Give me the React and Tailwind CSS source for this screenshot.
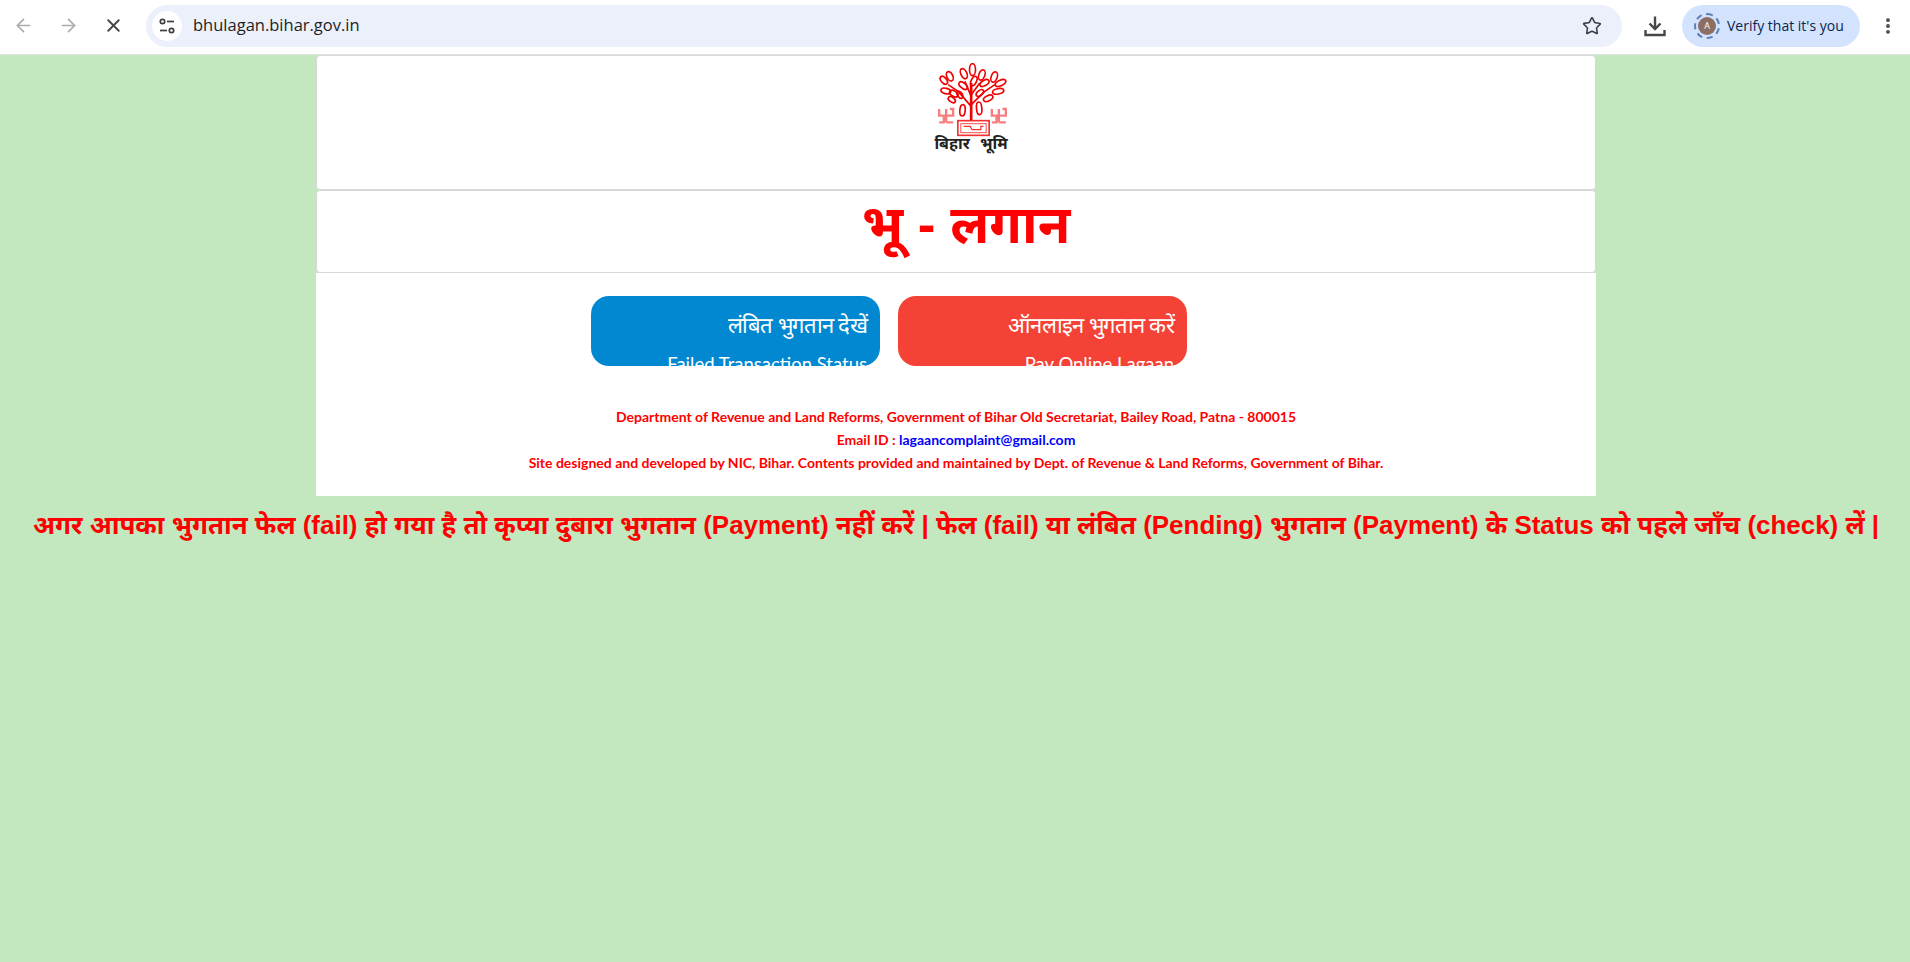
import React from "react";
import { ArrowLeft, ArrowRight, X, Star, EllipsisVertical } from "lucide-react";

const leaves = [
	[248, 60, 9, 18, 0],
	[222, 72, 9, 16, -25],
	[276, 76, 9, 16, 20],
	[252, 94, 8, 15, 25],
	[220, 108, 8, 15, -50],
	[284, 100, 8, 15, 60],
	[180, 80, 9, 15, -25],
	[162, 92, 8, 14, -40],
	[313, 82, 9, 16, 20],
	[332, 100, 8, 17, 65],
	[168, 124, 8, 15, -75],
	[192, 132, 8, 14, -60],
	[325, 125, 8, 17, 80],
	[295, 146, 8, 15, 65],
	[186, 150, 7, 12, -55],
	[210, 135, 7, 12, -35],
	[270, 130, 7, 13, 50],
	[218, 182, 8, 17, 5],
	[268, 176, 8, 19, -5],
];

function TuneIcon() {
	return (
		<svg width="18" height="18" viewBox="0 0 18 18" fill="none" stroke="#3c4043" strokeWidth="1.7">
			<circle cx="4.5" cy="4.5" r="2.2" />
			<path d="M9 4.5h7" />
			<path d="M2 13.5h7" />
			<circle cx="13.5" cy="13.5" r="2.2" />
		</svg>
	);
}

function DownloadIcon() {
	return (
		<svg width="22" height="22" viewBox="0 0 22 22" fill="none" stroke="#474747" strokeWidth="2.4">
			<path d="M11 1.5v12" />
			<path d="M5.5 8.5l5.5 5.5 5.5-5.5" />
			<path d="M1.5 15v5h19v-5" />
		</svg>
	);
}

function BiharLogo() {
	return (
		<div className="ml-[30px] flex flex-col items-center">
			<svg width="77" height="74" viewBox="130 40 230 222" fill="none" stroke="#f00000" strokeWidth="5">
				{leaves.map(([cx, cy, rx, ry, rot], i) => (
					<ellipse key={i} cx={cx} cy={cy} rx={rx} ry={ry} transform={`rotate(${rot} ${cx} ${cy})`} />
				))}
				<path d="M244 212V100" strokeWidth="8" />
				<path d="M244 170L205 125M244 165L285 125M244 140L225 95M244 135L270 100M205 125L175 105M285 125L315 105" strokeWidth="5" />
				<g strokeWidth="7" opacity="0.5">
					<path d="M148 178v20h42v-20h-10M169 178v40M148 218h14v-20M190 218h-21" />
					<path d="M306 178v20h42v-20h-10M327 178v40M306 218h14v-20M348 218h-21" />
				</g>
				<rect x="204" y="213" width="94" height="44" strokeWidth="5" opacity="0.8" />
				<rect x="213" y="222" width="76" height="27" strokeWidth="3" opacity="0.7" />
				<path d="M221 230h20l6 10h26v-10h8" strokeWidth="3.5" opacity="0.8" />
			</svg>
			<div className="mt-[-2px] text-[16px] leading-[17px] font-bold [word-spacing:6px] text-[#222] font-['Noto_Sans','Lato',sans-serif]">
				बिहार भूमि
			</div>
		</div>
	);
}

function Toolbar() {
	return (
		<div className="flex h-[55px] items-center bg-white border-b border-[#e2e2e2] pb-[3px] font-['Open_Sans',sans-serif]">
			<div className="flex w-[146px] items-center pl-[13px] gap-[24px]">
				<ArrowLeft size={21} strokeWidth={1.9} className="text-[#ababab]" />
				<ArrowRight size={21} strokeWidth={1.9} className="text-[#ababab]" />
				<X size={21} strokeWidth={2.2} className="text-[#474747]" />
			</div>
			<div className="flex h-[42px] w-[1476px] items-center rounded-full bg-[#ebf0fa] pl-[6px] pr-[20px]">
				<div className="flex h-[30px] w-[30px] items-center justify-center rounded-full bg-white">
					<TuneIcon />
				</div>
				<span className="ml-[11px] text-[16.5px] text-[#1f1f1f]">bhulagan.bihar.gov.in</span>
				<Star size={20} strokeWidth={1.9} className="ml-auto text-[#3c4043]" />
			</div>
			<div className="flex w-[60px] justify-center pl-[6px]">
				<DownloadIcon />
			</div>
			<div className="flex h-[42px] w-[178px] items-center rounded-full bg-[#d3e3fd] pl-[12px]">
				<div className="flex h-[26px] w-[26px] items-center justify-center rounded-full border-2 border-dashed border-[#5b7fb5]">
					<div className="flex h-[18px] w-[18px] items-center justify-center rounded-full bg-[#8d6e63] text-[9px] text-white">
						A
					</div>
				</div>
				<span className="ml-[7px] text-[14px] text-[#0a2351]">Verify that it's you</span>
			</div>
			<EllipsisVertical size={20} strokeWidth={2.6} className="ml-[18px] text-[#474747]" />
		</div>
	);
}

function StatusButton({ color, hindi, english }) {
	return (
		<div className={`h-[70px] w-[289px] overflow-hidden rounded-[18px] pr-[13px] pt-[14px] text-right text-white ${color}`}>
			<div className="text-[22px] leading-[29px] tracking-[-0.7px] font-light">{hindi}</div>
			<div className="mt-[13px] text-[18.5px] leading-[24px]">{english}</div>
		</div>
	);
}

export default function App() {
	return (
		<div className="flex min-h-[962px] flex-col bg-[#c3e8c0] font-['Liberation_Sans','Noto_Sans',sans-serif]">
			<Toolbar />
			<div className="ml-[316px] flex w-[1280px] flex-col">
				<div className="flex h-[135px] justify-center rounded-[4px] border border-[#d8d8d8] bg-white pt-[7px]">
					<BiharLogo />
				</div>
				<div className="flex h-[83px] items-center justify-center rounded-[4px] border border-[#d8d8d8] bg-white pb-[15px] pl-[20px] text-[53px] leading-none font-bold text-[#ff0000]">
					भू - लगान
				</div>
				<div className="h-[223px] bg-white pt-[23px] font-['Lato',sans-serif]">
					<div className="flex gap-[18px] pl-[275px]">
						<StatusButton color="bg-[#0288d1]" hindi="लंबित भुगतान देखें" english="Failed Transaction Status" />
						<StatusButton color="bg-[#f44336]" hindi="ऑनलाइन भुगतान करें" english="Pay Online Lagaan" />
					</div>
					<div className="mt-[39px] text-center text-[14px] leading-[23px] font-bold text-[#ff0000]">
						<div>Department of Revenue and Land Reforms, Government of Bihar Old Secretariat, Bailey Road, Patna - 800015</div>
						<div>
							Email ID : <span className="text-[#0000ff]">lagaancomplaint@gmail.com</span>
						</div>
						<div>Site designed and developed by NIC, Bihar. Contents provided and maintained by Dept. of Revenue &amp; Land Reforms, Government of Bihar.</div>
					</div>
				</div>
			</div>
			<div className="mt-[14px] whitespace-nowrap pl-[2px] text-center text-[25.95px] leading-[31px] font-bold text-[#ff0000]">
				अगर आपका भुगतान फेल (fail) हो गया है तो कृप्या दुबारा भुगतान (Payment) नहीं करें | फेल (fail) या लंबित (Pending) भुगतान (Payment) के Status को पहले जाँच (check) लें |
			</div>
		</div>
	);
}
